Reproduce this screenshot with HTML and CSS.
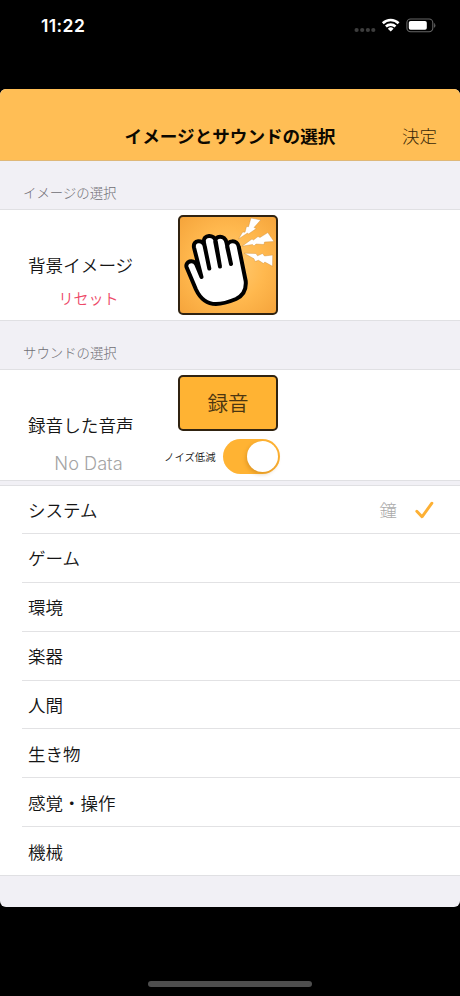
FILE: index.html
```html
<!DOCTYPE html>
<html lang="ja">
<head>
<meta charset="utf-8">
<title>イメージとサウンドの選択</title>
<link rel="stylesheet" href="styles.css">
</head>
<body>
<header class="status">
  <time class="clock">11:22</time>
  <svg class="indicators" width="86" height="18" viewBox="0 0 86 18">
    <g fill="#3d3d3d"><circle cx="6.6" cy="13" r="2.1"/><circle cx="12.2" cy="13" r="2.1"/><circle cx="17.9" cy="13" r="2.1"/><circle cx="23.3" cy="13" r="2.1"/></g>
    <g fill="none" stroke="#fff" stroke-width="2.6"><path d="M32.8 6.2A11.5 11.5 0 0 1 48.6 6.2"/><path d="M35.9 9.5A7 7 0 0 1 45.5 9.5"/></g>
    <path d="M37.8 11.7A4.2 4.2 0 0 1 43.6 11.7L40.7 14.6Z" fill="#fff"/>
    <rect x="56.9" y="2" width="25.9" height="12.7" rx="3.7" fill="none" stroke="#666" stroke-width="1.1"/>
    <rect x="58.8" y="3.9" width="18" height="8.9" rx="1.8" fill="#fff"/>
    <path d="M84.4 6.4q1.5 2 0 4z" fill="#777" stroke="#666" stroke-width=".5"/>
  </svg>
</header>
<main class="sheet">
  <nav class="navbar"><h1 class="title">イメージとサウンドの選択</h1><span class="done">決定</span></nav>
  <h2 class="section">イメージの選択</h2>
  <section class="panel">
    <div class="labels"><p class="name">背景イメージ</p><p class="reset">リセット</p></div>
    <div class="controls">
      <div class="picture">
        <svg width="96" height="96" viewBox="2 2 96 96">
          <path d="M23.5 62L18.3 49.5C15.5 43.5 6.5 46.5 8.7 52.5L18 74.5C22 83 28 89 38 89C44 89 52 86.5 58 84C64.5 81 68.5 75 67.7 66L60.8 32C59.5 24 48.5 25 49.2 32L53 49L48.5 27.5C47 19.5 36.5 20 37.3 27L42 51.5L37.8 26.5C36.5 18.5 24.8 19.5 25.8 27L31.3 53.5L26.8 31.5C25 23.5 14.5 25 16 32.5Z" fill="#fff" stroke="#000" stroke-width="4" stroke-linejoin="round"/>
          <g fill="#fff" stroke="#c98c38" stroke-width=".4"><path d="M60.5 24L64.7 17L67 17.2L68.5 11.5L70.5 11.7L73 3L82.7 5L76 12.5L78.3 13.5L70.5 19L69.5 18Z"/><path d="M64 31.2L74 24L75.5 25L80 21.5L82 22.5L89.8 17.6L96 26.5L86.5 27L86 29.5L78 29L76 31L74.5 29.5Z"/><path d="M66 38.2L78 38.5L79.5 40.8L84.5 38.5L86.5 41L94.7 40L94.5 51.3L86.8 47L85.5 48.5L80.5 45.3L77 46.5L76 43.8Z"/></g>
        </svg>
      </div>
    </div>
  </section>
  <h2 class="section">サウンドの選択</h2>
  <section class="panel">
    <div class="labels"><p class="name">録音した音声</p><p class="empty">No Data</p></div>
    <div class="controls">
      <div class="record"><span>録音</span></div>
      <div class="noise"><span>ノイズ低減</span><i class="switch"></i></div>
    </div>
  </section>
  <ul class="list">
    <li><span>システム</span><span class="choice">鐘<svg class="check" width="20" height="19" viewBox="0 0 20 19"><path d="M1.8 11.2L7 16.8L16.9 3.2" fill="none" stroke="#fdb034" stroke-width="2.9" stroke-linecap="round" stroke-linejoin="round"/></svg></span></li>
    <li>ゲーム</li>
    <li>環境</li>
    <li>楽器</li>
    <li>人間</li>
    <li>生き物</li>
    <li>感覚・操作</li>
    <li>機械</li>
  </ul>
</main>
<footer class="home"><i></i></footer>
</body>
</html>
```
FILE: styles.css
```css
* { box-sizing: border-box; margin: 0; padding: 0; }
body {
  width: 460px; height: 996px; overflow: hidden;
  display: flex; flex-direction: column;
  background: #000; color: #151515;
  font-family: "Noto Sans CJK JP", sans-serif;
  font-size: 17.5px; font-weight: 350;
}
.status { height: 89px; padding: 16px 24px 0 41px; display: flex; justify-content: space-between; align-items: flex-start; }
.clock { color: #fff; font: 600 17.5px/20px Inter, sans-serif; letter-spacing: 0.4px; }
.indicators { margin-top: 1px; }
.sheet { height: 818px; border-radius: 6px; overflow: hidden; background: #f1f0f5; }
.navbar { height: 72px; padding: 22px 23px 0; display: grid; grid-template-columns: 1fr auto 1fr; align-items: center; background: #ffbe55; border-bottom: 1px solid #dfb878; }
.title { grid-column: 2; font-size: 17.6px; line-height: 26px; font-weight: 700; color: #0c0800; }
.done { justify-self: end; line-height: 26px; font-weight: 300; color: #3a2808; }
.section { height: 48px; padding: 20px 23px 0; font-size: 13.4px; line-height: 22px; font-weight: 300; color: #6f6e74; }
.panel { height: 112px; display: grid; grid-template-columns: 150px 1fr; background: #fff; border-top: 1px solid #e0e0e3; border-bottom: 1px solid #e0e0e3; }
.labels { padding: 42px 0 0 28px; }
.name { line-height: 26px; font-size: 17.6px; }
.reset, .empty { width: 121px; text-align: center; line-height: 22px; }
.reset { margin-top: 9px; font-size: 15px; color: #ed4968; }
.empty { margin-top: 14px; color: #a4a4a4; font: 300 18.2px/22px Inter, sans-serif; }
.controls { padding-top: 5px; }
.picture, .record { width: 100px; margin-left: 28px; border: 2px solid #302311; border-radius: 5px; }
.picture { height: 100px; overflow: hidden; background: radial-gradient(circle, #ffc96f 10%, #ffb84e 55%, #f5a43b); }
.picture svg { display: block; }
.record { height: 56px; padding-bottom: 2px; display: flex; align-items: center; justify-content: center; background: #ffb333; color: #4b3511; font-size: 20.5px; }
.noise { display: flex; align-items: center; gap: 7px; margin: 8px 0 0 14px; font-size: 10.4px; }
.noise span { width: 52px; white-space: nowrap; }
.switch { width: 57px; height: 35px; padding: 2px; display: flex; justify-content: flex-end; border-radius: 18px; background: #ffb333; }
.switch::before { content: ""; width: 31px; height: 31px; border-radius: 50%; background: #fff; box-shadow: -1px 2px 4px #9b5a0055; }
.list { margin-top: 4px; list-style: none; background: #fff; border-top: 1px solid #e0e0e3; border-bottom: 1px solid #e0e0e3; }
.list li { height: 48.85px; margin-left: 22px; padding: 0 25px 0 6px; display: flex; align-items: center; justify-content: space-between; border-bottom: 1px solid #e2e2e4; }
.list li:first-child { height: 48px; padding-bottom: 1px; }
.list li:last-child { height: 47.9px; border-bottom: 0; }
.choice { display: flex; align-items: center; gap: 18px; color: #aaa; font-weight: 300; }
.home { flex: 1; padding-top: 74px; }
.home i { display: block; width: 164px; height: 6px; margin: 0 auto; border-radius: 3px; background: #4e4e4e; }
```
